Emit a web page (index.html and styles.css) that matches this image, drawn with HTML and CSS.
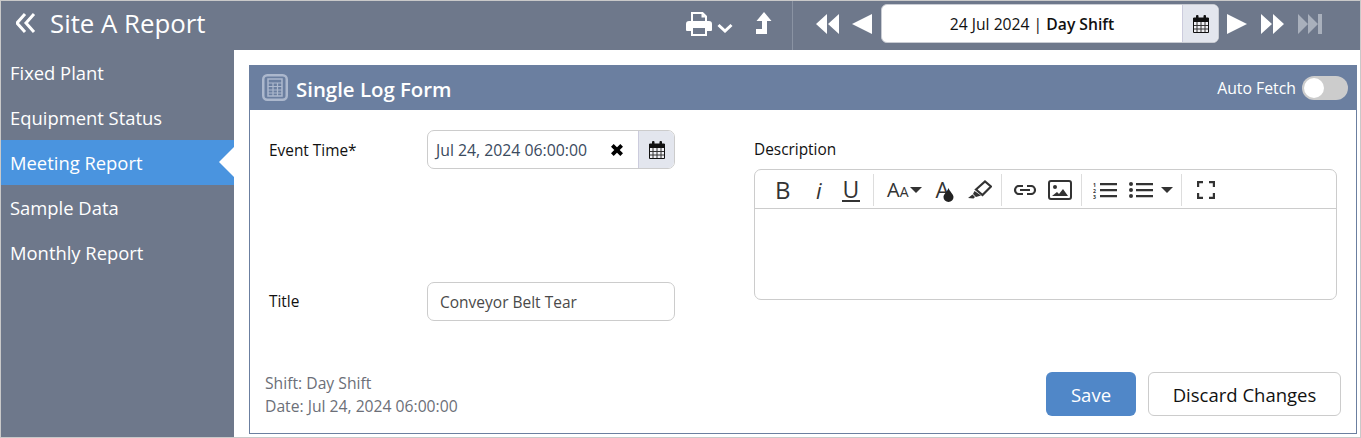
FILE: index.html
```html
<!DOCTYPE html>
<html lang="en">
<head>
<meta charset="utf-8">
<title>Site A Report</title>
<link rel="stylesheet" href="styles.css">
</head>
<body>
<div class="app">
  <header class="topbar">
    <div class="brand">
      <svg class="ic-back" viewBox="0 0 20 20"><path d="M9 1 1 10l8 9M18 1l-8 9 8 9" fill="none" stroke="#fff" stroke-width="3"/></svg>
      <span class="brand-title">Site A Report</span>
    </div>
    <div class="tools">
      <svg class="ic-print" viewBox="0 0 26 24"><path d="M6 10V1h10.500L20 4.500V10" fill="none" stroke="#fff" stroke-width="2"/><path d="M15.500 1v4.500H20z" fill="#fff"/><path d="M3 9h20q3 0 3 3v6q0 1-1 1h-4v-4H5v4H1q-1 0-1-1v-6q0-3 3-3z" fill="#fff"/><path d="M6 15h14v8H6z" fill="none" stroke="#fff" stroke-width="2"/><path d="M5 22h16v2H5z" fill="#fff"/></svg>
      <svg class="ic-caret" viewBox="0 0 16 10"><path d="M1.500 2l6.500 6 6.500-6" fill="none" stroke="#fff" stroke-width="3"/></svg>
      <svg class="ic-up" viewBox="0 0 16 22"><path d="M8 0l7.500 9H11v13H0v-5h6V9H.5z" fill="#fff"/></svg>
    </div>
    <div class="pager">
      <svg class="ic-w23" viewBox="0 0 23 20"><path d="M11 0v20L0 10zM23 0v20L12 10z" fill="#fff"/></svg>
      <svg class="ic-w20" viewBox="0 0 20 20"><path d="M20 0v20L0 10z" fill="#fff"/></svg>
      <div class="datebox">
        <div class="datebox-text">24 Jul 2024 | <b>Day Shift</b></div>
        <div class="addon">
          <svg class="ic-cal" viewBox="0 0 16 18"><use href="#cal"/></svg>
        </div>
      </div>
      <svg class="ic-w20" viewBox="0 0 20 20"><path d="M0 0v20l20-10z" fill="#fff"/></svg>
      <svg class="ic-w20 gap-fwd" viewBox="0 0 23 20"><path d="M0 0v20l11-10zM12 0v20l11-10z" fill="#fff"/></svg>
      <svg class="ic-last" viewBox="0 0 25 20"><path d="M0 0v20l10-10zM10 0v20l10-10zM20 0h4v20h-4z" fill="#a9b0bc"/></svg>
    </div>
  </header>
  <div class="body">
    <nav class="sidebar">
      <a class="nav-item">Fixed Plant</a>
      <a class="nav-item">Equipment Status</a>
      <a class="nav-item active">Meeting Report</a>
      <a class="nav-item">Sample Data</a>
      <a class="nav-item">Monthly Report</a>
    </nav>
    <main class="main">
      <section class="panel">
        <div class="panel-head">
          <svg class="ic-table" viewBox="0 0 26 27"><rect x="1.250" y="1.250" width="23.500" height="24.500" rx="4" fill="none" stroke="#acb8cd" stroke-width="2.500"/><rect x="6" y="5" width="14" height="17" fill="none" stroke="#acb8cd" stroke-width="1.500"/><path d="M6 9h14M6 12.500h14M6 16h14M6 19h14M11 9v13M15.500 9v13" stroke="#acb8cd" stroke-width="1.200"/></svg>
          <h2 class="panel-title">Single Log Form</h2>
          <span class="autofetch">Auto Fetch</span>
          <span class="toggle"><span class="knob"></span></span>
        </div>
        <div class="panel-body">
          <div class="form">
            <div class="form-left">
              <div class="row row-event">
                <label class="label">Event Time*</label>
                <div class="input-group">
                  <span class="input-val">Jul 24, 2024 06:00:00</span>
                  <svg class="ic-x" viewBox="0 0 12 12"><path d="M2 2l8 8M10 2l-8 8" stroke="#000" stroke-width="3.200"/></svg>
                  <span class="addon addon-sm">
                    <svg class="ic-cal" viewBox="0 0 16 18"><use href="#cal"/></svg>
                  </span>
                </div>
              </div>
              <div class="row row-title">
                <label class="label">Title</label>
                <div class="input-text">Conveyor Belt Tear</div>
              </div>
            </div>
            <div class="form-right">
              <label class="label desc-label">Description</label>
              <div class="editor">
                <div class="toolbar">
                  <div class="tb-group g1">
                    <span class="tb-b">B</span>
                    <span class="tb-i">i</span>
                    <span class="tb-u">U</span>
                  </div>
                  <div class="tb-group g2">
                    <span class="tb-aa">A<small>A</small></span>
                    <svg class="tb-caret" viewBox="0 0 12 6"><path d="M0 0h12L6 6z" fill="#333"/></svg>
                    <span class="tb-color"><span class="tb-color-a">A</span><svg class="ic-drop" viewBox="0 0 11 14"><path d="M5.500 0C4 4 .5 6 .5 9a5 5 0 0 0 10 0C10.500 6 7 4 5.500 0z" fill="#222"/></svg></span>
                    <svg class="ic-marker" viewBox="0 0 24 19"><path d="M8 9.500 17 1.500 23 6.500l-8.500 8.500z" fill="none" stroke="#333" stroke-width="2.200"/><path d="M6.500 11l-1.500 3 3 3 5-1.500zM0 18l4.500-3.500 2.500 2.500-1.500 1.500z" fill="#333"/></svg>
                  </div>
                  <div class="tb-group g3">
                    <svg class="ic-link" viewBox="0 0 24 10"><path d="M10 1H6a4 4 0 0 0 0 8h4M14 1h4a4 4 0 0 1 0 8h-4M7 5h10" fill="none" stroke="#333" stroke-width="2.200"/></svg>
                    <svg class="ic-image" viewBox="0 0 24 20"><rect x="1" y="1" width="22" height="18" rx="2" fill="none" stroke="#333" stroke-width="2"/><circle cx="7" cy="7" r="2" fill="#333"/><path d="M4 16l5-4 2 2 4-5 5 7z" fill="#333"/></svg>
                  </div>
                  <div class="tb-group g4">
                    <svg class="ic-list" viewBox="0 0 24 18"><path d="M7 2h17v2.200H7zM7 8h17v2.200H7zM7 14h17v2.200H7z" fill="#333"/><text class="ol-num" x="0" y="5.500">1</text><text class="ol-num" x="0" y="11.500">2</text><text class="ol-num" x="0" y="17.500">3</text></svg>
                    <svg class="ic-list" viewBox="0 0 24 18"><circle cx="2" cy="3" r="2" fill="#333"/><circle cx="2" cy="9" r="2" fill="#333"/><circle cx="2" cy="15" r="2" fill="#333"/><path d="M7 2h17v2.200H7zM7 8h17v2.200H7zM7 14h17v2.200H7z" fill="#333"/></svg>
                    <svg class="tb-caret" viewBox="0 0 12 6"><path d="M0 0h12L6 6z" fill="#333"/></svg>
                  </div>
                  <div class="tb-group g5">
                    <svg class="ic-full" viewBox="0 0 18 18"><path d="M1 6V1h5M12 1h5v5M17 12v5h-5M6 17H1v-5" fill="none" stroke="#333" stroke-width="2.400"/></svg>
                  </div>
                </div>
                <div class="editor-area"></div>
              </div>
            </div>
          </div>
          <div class="foot">
            <div class="meta">
              <div>Shift: Day Shift</div>
              <div>Date: Jul 24, 2024 06:00:00</div>
            </div>
            <div class="actions">
              <button class="btn btn-save">Save</button>
              <button class="btn btn-discard">Discard Changes</button>
            </div>
          </div>
        </div>
      </section>
    </main>
  </div>
</div>
<svg class="defs" width="0" height="0">
  <symbol id="cal" viewBox="0 0 16 18">
    <path d="M.5 3h15v14.500H.5z" fill="#f1f1f5" stroke="#111" stroke-width="1"/>
    <path d="M0 3h16v4H0z" fill="#111"/>
    <path d="M4 7v10M8 7v10M12 7v10M1 10.500h14M1 14h14" stroke="#333" stroke-width="1"/>
    <rect x="3" y="0" width="2.500" height="5" rx="1" fill="#111"/>
    <rect x="10.500" y="0" width="2.500" height="5" rx="1" fill="#111"/>
  </symbol>
</svg>
</body>
</html>
```
FILE: styles.css
```css
* { box-sizing: border-box; }
html, body { margin: 0; padding: 0; }
body { width: 1361px; height: 438px; overflow: hidden; font-family: "Open Sans", "Noto Sans", sans-serif; background: #fff; color: #111; }
.defs { position: absolute; }
.app { width: 1361px; height: 438px; border: 1px solid #c9c9c9; display: flex; flex-direction: column; }
.topbar { height: 49px; background: #6e788b; display: flex; flex: none; }
.brand { display: flex; align-items: center; width: 685px; padding: 0 0 5px 15px; flex: none; }
.ic-back { width: 20px; height: 20px; flex: none; }
.brand-title { color: #fff; font-size: 25.800px; margin-left: 14px; white-space: nowrap; }
.tools { width: 107px; flex: none; display: flex; align-items: center; padding-bottom: 4px; border-right: 1px solid #8a93a3; }
.ic-print { width: 26px; height: 24px; flex: none; }
.ic-caret { width: 16px; height: 10px; flex: none; margin: 9px 0 0 5px; }
.ic-up { width: 16px; height: 22px; flex: none; margin: -1px 0 0 23px; }
.pager { display: flex; align-items: center; padding: 0 0 4px 23px; }
.ic-w23 { width: 23px; height: 20px; flex: none; margin-right: 13px; }
.ic-w20 { width: 20px; height: 20px; flex: none; }
.gap-fwd { width: 23px; margin-left: 14px; }
.ic-last { width: 25px; height: 20px; flex: none; margin-left: 14px; }
.datebox { width: 338px; height: 39px; background: #fff; border: 1px solid #c9ccd3; border-radius: 6px; display: flex; margin: 0 8px 0 9px; overflow: hidden; }
.datebox-text { flex: 1; display: flex; align-items: center; justify-content: center; font-size: 15.700px; white-space: pre; }
.datebox-text b { font-weight: 600; }
.addon { width: 36px; flex: none; background: #e3e6ee; border-left: 1px solid #ccd; display: flex; align-items: center; justify-content: center; }
.ic-cal { width: 16px; height: 18px; }
.body { flex: 1; display: flex; min-height: 0; }
.sidebar { width: 233px; flex: none; background: #6e788b; display: flex; flex-direction: column; }
.nav-item { height: 45px; display: flex; align-items: center; padding-left: 9px; color: #fff; font-size: 18.400px; position: relative; }
.nav-item.active { background: #4a94df; }
.nav-item.active::after { content: ""; position: absolute; right: 0; top: 7px; border-style: solid; border-width: 15px 15px 15px 0; border-color: transparent #fff transparent transparent; }
.main { flex: 1; padding: 15px 3px 3px 15px; min-width: 0; background: #fff; }
.panel { height: 100%; border: 1px solid #6b7fa0; display: flex; flex-direction: column; }
.panel-head { height: 45px; margin: -1px -1px 0; flex: none; background: #6b7fa0; display: flex; align-items: center; padding: 0 9px 0 13px; color: #fff; }
.ic-table { width: 26px; height: 27px; flex: none; }
.panel-title { margin: 2px 0 0 8px; font-size: 20.400px; font-weight: 600; flex: 1; }
.autofetch { font-size: 15.800px; margin-right: 6px; }
.toggle { width: 46px; height: 24px; border-radius: 12px; background: #ccc; padding: 2px; display: block; }
.knob { display: block; width: 20px; height: 20px; border-radius: 50%; background: #fff; }
.panel-body { flex: 1; display: flex; flex-direction: column; padding: 20px 15px 15px; min-height: 0; }
.form { display: flex; flex: 1; min-height: 0; }
.form-left { width: 489px; flex: none; padding-left: 4px; display: flex; flex-direction: column; }
.row { display: flex; align-items: center; }
.row-title { margin-top: 113px; }
.label { font-size: 15.400px; display: block; }
.row .label { width: 158px; flex: none; margin-top: 1px; }
.row-title .label { margin-top: 0; }
.input-group { width: 248px; height: 39px; border: 1px solid #ccc; border-radius: 7px; display: flex; align-items: center; overflow: hidden; }
.input-val { flex: 1; padding-left: 8px; font-size: 15.800px; color: #3a4a5e; white-space: nowrap; }
.ic-x { width: 14px; height: 14px; flex: none; margin-right: 14px; }
.addon-sm { align-self: stretch; }
.input-text { width: 248px; height: 39px; border: 1px solid #ccc; border-radius: 7px; display: flex; align-items: center; padding-left: 12px; font-size: 15.500px; color: #4a4a4a; }
.form-right { width: 583px; flex: none; }
.desc-label { height: 18px; line-height: 18px; margin: 11px 0 10px; }
.editor { height: 131px; border: 1px solid #ccc; border-radius: 7px; display: flex; flex-direction: column; }
.toolbar { height: 39px; flex: none; border-bottom: 1px solid #ccc; display: flex; align-items: center; padding: 1px 0 0 3px; }
.tb-group { height: 32px; display: flex; align-items: center; border-right: 1px solid #ddd; flex: none; color: #333; }
.g1 { width: 116px; }
.g2 { width: 128px; }
.g3 { width: 80px; }
.g4 { width: 100px; }
.g5 { border-right: 0; padding-left: 15px; }
.tb-b { font-size: 24px; font-weight: 400; margin-left: 17px; width: 41px; line-height: 1; }
.tb-i { font-size: 22px; font-style: italic; width: 26px; line-height: 1; }
.tb-u { font-size: 23px; border-bottom: 2px solid #333; line-height: 22px; width: 18px; text-align: center; }
.tb-aa { font-size: 20px; margin-left: 13px; line-height: 1; }
.tb-aa small { font-size: 14px; }
.tb-caret { width: 12px; height: 6px; flex: none; margin-left: 1px; }
.tb-color { position: relative; width: 18px; height: 24px; margin-left: 14px; display: block; flex: none; }
.tb-color-a { font-size: 22px; line-height: 22px; display: block; }
.ic-drop { position: absolute; right: 0; bottom: 0; width: 11px; height: 14px; }
.ic-marker { width: 24px; height: 19px; flex: none; margin-left: 14px; }
.ic-link { width: 24px; height: 10px; flex: none; margin-left: 11px; }
.ic-image { width: 24px; height: 20px; flex: none; margin-left: 11px; }
.ic-list { width: 24px; height: 18px; flex: none; margin-left: 11px; }
.ic-list + .ic-list { margin-left: 12px; }
.ic-list + .tb-caret { margin-left: 8px; }
.ol-num { font: 700 5.200px "Open Sans", sans-serif; fill: #333; }
.ic-full { width: 18px; height: 18px; display: block; }
.editor-area { flex: 1; }
.foot { display: flex; justify-content: space-between; align-items: flex-end; flex: none; }
.meta { font-size: 15.700px; line-height: 23px; color: #6c6f78; }
.actions { display: flex; gap: 12px; margin-bottom: 2px; }
.btn { height: 44px; border-radius: 6px; font: 400 18.500px "Open Sans", "Noto Sans", sans-serif; padding: 0; }
.btn-save { width: 90px; background: #5087c8; color: #fff; border: 0; }
.btn-discard { width: 193px; background: #fff; color: #111; border: 1px solid #ccc; }
```
